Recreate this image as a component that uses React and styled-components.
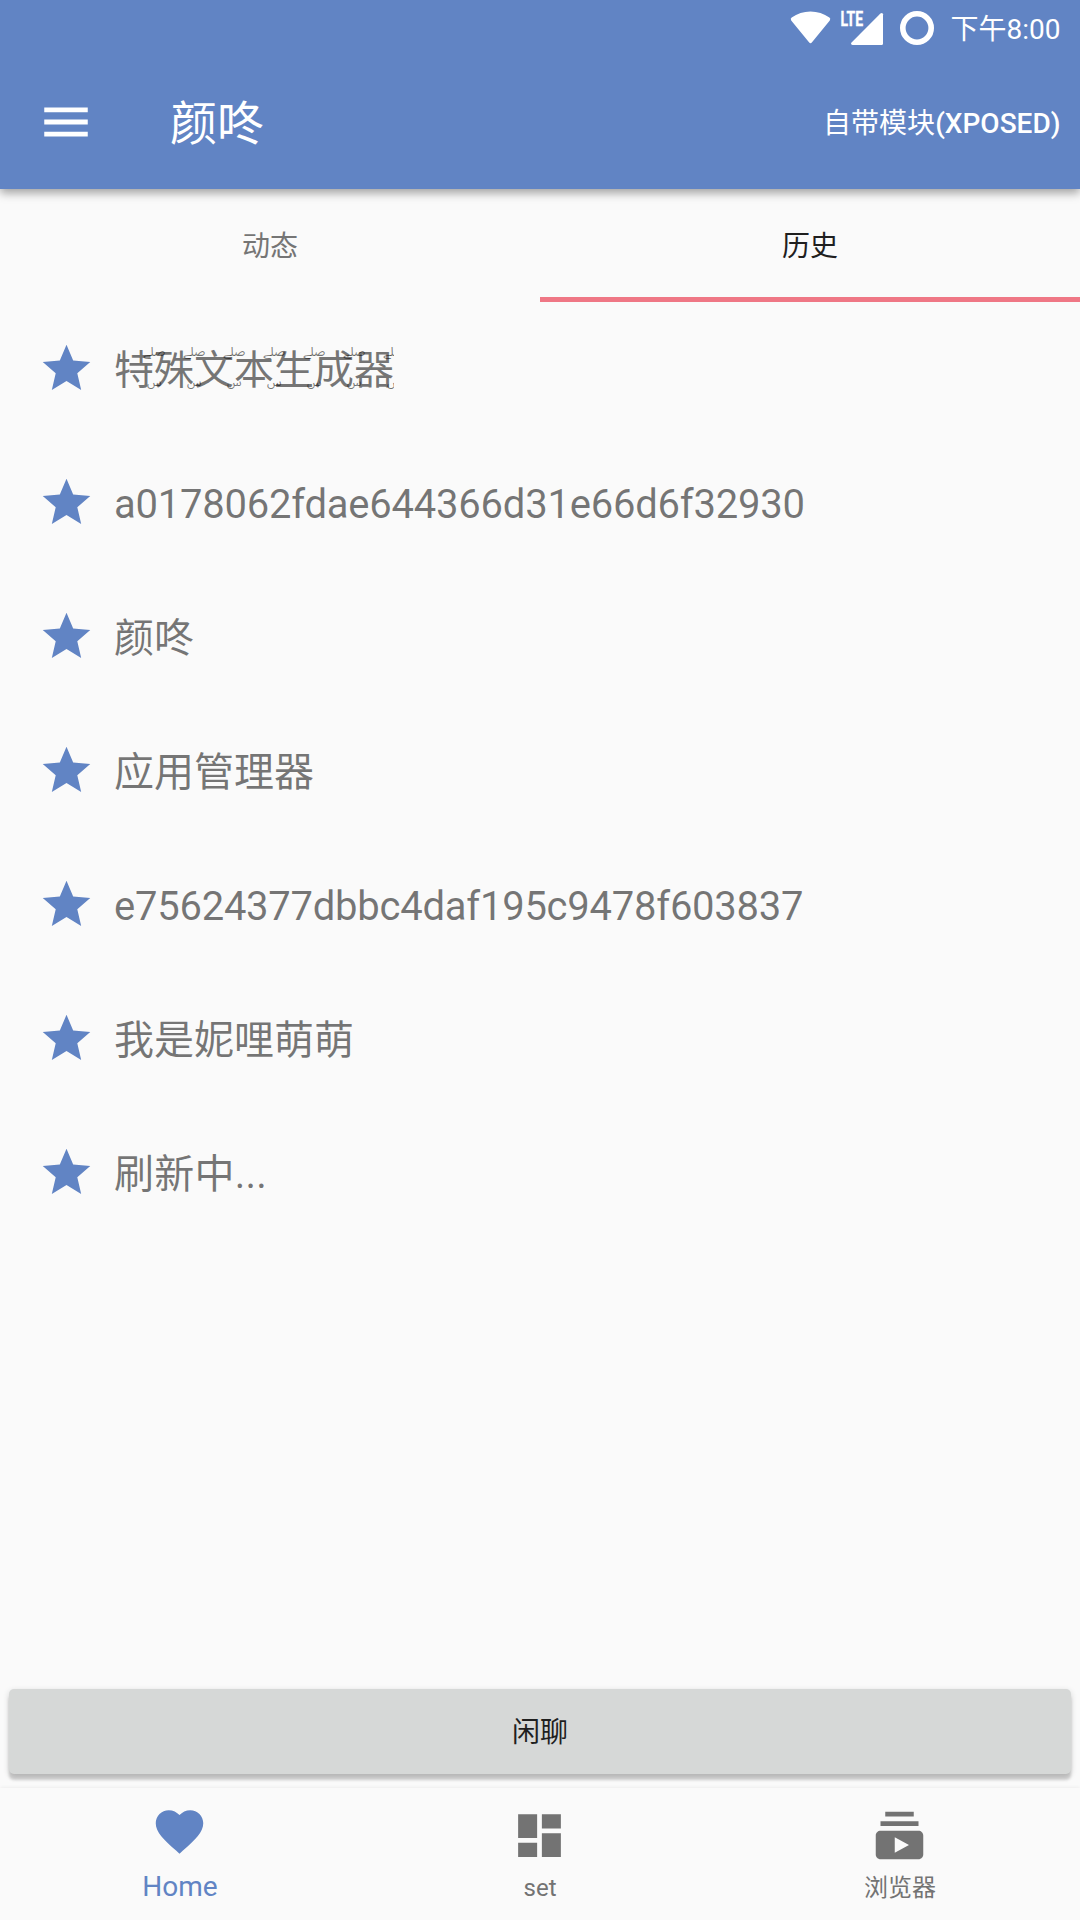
import React, { useState } from 'react';
import styled, { createGlobalStyle } from 'styled-components';

const GlobalStyle = createGlobalStyle`
  * {
    box-sizing: border-box;
  }

  body {
    margin: 0;
    background: #fafafa;
    font-family: Roboto, 'Noto Sans CJK SC', sans-serif;
  }

  button {
    border: none;
    padding: 0;
    background: none;
    font-family: inherit;
  }
`;

const Screen = styled.div`
  width: 1080px;
  height: 1920px;
  display: flex;
  flex-direction: column;
  overflow: hidden;
  background: #fafafa;
`;

const Header = styled.header`
  flex: none;
  height: 189px;
  color: #ffffff;
  background: #6184c4;
  box-shadow: 0 4px 9px rgba(0, 0, 0, 0.36);
`;

const StatusBar = styled.div`
  height: 57px;
  padding: 0 19.5px 0 789px;
  display: flex;
  align-items: center;
`;

const StatusIcons = styled.svg`
  flex: none;
  width: 150px;
  height: 57px;
`;

const Clock = styled.span`
  margin-left: auto;
  padding-top: 2px;
  font-size: 28px;
  line-height: 57px;
  white-space: nowrap;
`;

const Toolbar = styled.div`
  height: 132px;
  padding: 0 19.5px 0 37px;
  display: flex;
  align-items: center;
`;

const MenuButton = styled.button`
  width: 58px;
  height: 60px;
  padding-bottom: 2px;
  color: inherit;
`;

const Title = styled.h1`
  margin: 0 auto 0 75px;
  padding-top: 2px;
  font-size: 47px;
  font-weight: 400;
  line-height: 60px;
`;

const ModuleButton = styled.button`
  padding-top: 2px;
  color: inherit;
  font-size: 28px;
  line-height: 40px;
`;

const Medium = styled.span`
  font-weight: 500;
`;

const Tabs = styled.div`
  flex: none;
  height: 113px;
  display: grid;
  grid-template-columns: 1fr 1fr;
`;

const Tab = styled.button`
  padding-top: 2px;
  border-bottom: 5px solid ${(props) => (props.$active ? '#ef7785' : 'transparent')};
  color: ${(props) => (props.$active ? '#1f1f1f' : '#757575')};
  font-size: 28px;
`;

const List = styled.ul`
  flex: 1;
  margin: 0;
  padding: 0;
  list-style: none;
`;

const Row = styled.li`
  height: 134px;
  padding: 0 0 2px 38px;
  display: flex;
  align-items: center;
`;

const RowText = styled.span`
  margin-left: 19px;
  padding-top: 5px;
  color: rgba(0, 0, 0, 0.54);
  font-size: 40px;
  line-height: 60px;
  letter-spacing: ${(props) => props.$spacing || 'normal'};
`;

const Marked = styled.span`
  display: inline-flex;
  height: 60px;
  overflow-x: clip;
  overflow-y: visible;
  vertical-align: top;
`;

const MarkedChar = styled.span`
  position: relative;
  width: 40px;
`;

// small quranic signs which hang over the end of each character
const Mark = styled.span`
  position: absolute;
  left: ${(props) => (props.$low ? '33px' : '29.5px')};
  top: ${(props) => (props.$low ? '34px' : '3px')};
  font-family: 'Noto Sans Arabic', 'Noto Naskh Arabic', serif;
  font-size: ${(props) => (props.$low ? '12px' : '12.5px')};
  line-height: 16px;
  white-space: nowrap;
`;

const ChatButton = styled.button`
  flex: none;
  height: 85px;
  margin: 0 9px 14px;
  padding-bottom: 3px;
  border-radius: 5px;
  background: #d6d8d7;
  box-shadow: 0 6px 3px rgba(0, 0, 0, 0.17), 0 2px 6px rgba(0, 0, 0, 0.16);
  color: #1f1f1f;
  font-size: 28px;
`;

const BottomNav = styled.nav`
  flex: none;
  position: relative;
  height: 132px;
  display: grid;
  grid-template-columns: repeat(3, 1fr);
  background: #fafafa;
  box-shadow: 0 0 4px rgba(0, 0, 0, 0.08);
`;

const NavItem = styled.button`
  display: flex;
  flex-direction: column;
  align-items: center;
  padding-top: ${(props) => (props.$active ? '15px' : '19px')};
  color: ${(props) => (props.$active ? '#6184c4' : '#737373')};

  svg {
    margin-right: 1px;
  }
`;

const NavLabel = styled.span`
  margin-top: ${(props) => (props.$active ? '7px' : '4px')};
  font-size: ${(props) => (props.$active ? '28px' : '24px')};
  line-height: 40px;
`;

const Svg = styled.svg`
  display: block;
  flex: none;
  width: ${(props) => props.$size || 57}px;
  height: ${(props) => props.$size || 57}px;
  fill: ${(props) => props.$color || 'currentColor'};
`;

const icons = {
  menu: 'M3 18h18v-2H3v2zm0-5h18v-2H3v2zm0-7v2h18V6H3z',
  star: 'M12 17.27L18.18 21l-1.64-7.03L22 9.24l-7.19-.61L12 2 9.19 8.63 2 9.24l5.46 4.73L5.82 21z',
  heart:
    'M12 21.35l-1.45-1.32C5.4 15.36 2 12.28 2 8.5 2 5.42 4.42 3 7.5 3c1.74 0 3.41.81 4.5 2.09C13.09 3.81 14.76 3 16.5 3 19.58 3 22 5.42 22 8.5c0 3.78-3.4 6.86-8.55 11.54L12 21.35z',
  dashboard: 'M3 13h8V3H3v10zm0 8h8v-6H3v6zm10 0h8V11h-8v10zm0-18v6h8V3h-8z',
  subscriptions:
    'M20 8H4V6h16v2zm-2-6H6v2h12V2zm4 10v8c0 1.1-.9 2-2 2H4c-1.1 0-2-.9-2-2v-8c0-1.1.9-2 2-2h16c1.1 0 2 .9 2 2zm-6 4l-6-3.27v6.53L16 16z',
};

const Icon = ({ name, size, color }) => (
  <Svg viewBox="0 0 24 24" $size={size} $color={color}>
    <path d={icons[name]} />
  </Svg>
);

const tabs = ['动态', '历史'];

const history = [
  { id: 1, name: '特殊文本生成器', marked: true },
  { id: 2, name: 'a0178062fdae644366d31e66d6f32930', spacing: '-0.23px' },
  { id: 3, name: '颜咚' },
  { id: 4, name: '应用管理器' },
  { id: 5, name: 'e75624377dbbc4daf195c9478f603837', spacing: '-0.25px' },
  { id: 6, name: '我是妮哩萌萌' },
  { id: 7, name: '刷新中...', spacing: '0.25px' },
];

const navItems = [
  { icon: 'heart', label: 'Home' },
  { icon: 'dashboard', label: 'set' },
  { icon: 'subscriptions', label: '浏览器' },
];

const MarkedText = ({ text }) => (
  <Marked>
    {[...text].map((char, index) => (
      <MarkedChar key={index}>
        {char}
        <Mark>صلے</Mark>
        <Mark $low>س</Mark>
      </MarkedChar>
    ))}
  </Marked>
);

const App = () => {
  const [tab, setTab] = useState(1);
  const [page, setPage] = useState(0);

  return (
    <>
      <GlobalStyle />
      <Screen>
        <Header>
          <StatusBar>
            <StatusIcons viewBox="789 0 150 57" fill="#ffffff">
              <path d="M791.2 20.4Q790 18.8 791.7 17.6Q800 11.5 810.5 11.5T829.4 17.6Q831 18.8 829.8 20.4L812 42.3Q810.5 44 809 42.3Z" />
              <text
                x="840.5"
                y="26"
                fontSize="19.6"
                fontWeight="700"
                stroke="#ffffff"
                strokeWidth="0.4"
                textLength="22.5"
                lengthAdjust="spacingAndGlyphs"
              >
                LTE
              </text>
              <path d="M883 14.2V43.5Q883 45 881.5 45H852.5Q850 44.6 851.6 42.6L880.4 13.6Q882.4 12.2 883 14.2Z" />
              <circle cx="917" cy="28" r="14.2" fill="none" stroke="#ffffff" strokeWidth="5.6" />
            </StatusIcons>
            <Clock>下午8:00</Clock>
          </StatusBar>
          <Toolbar>
            <MenuButton>
              <Icon name="menu" size={58} />
            </MenuButton>
            <Title>颜咚</Title>
            <ModuleButton>
              自带模块<Medium>(XPOSED)</Medium>
            </ModuleButton>
          </Toolbar>
        </Header>

        <Tabs>
          {tabs.map((name, index) => (
            <Tab key={name} $active={tab === index} onClick={() => setTab(index)}>
              {name}
            </Tab>
          ))}
        </Tabs>

        <List>
          {history.map(({ id, name, marked, spacing }) => (
            <Row key={id}>
              <Icon name="star" color="#6184c4" />
              <RowText $spacing={spacing}>{marked ? <MarkedText text={name} /> : name}</RowText>
            </Row>
          ))}
        </List>

        <ChatButton>闲聊</ChatButton>

        <BottomNav>
          {navItems.map(({ icon, label }, index) => (
            <NavItem key={icon} $active={page === index} onClick={() => setPage(index)}>
              <Icon name={icon} />
              <NavLabel $active={page === index}>{label}</NavLabel>
            </NavItem>
          ))}
        </BottomNav>
      </Screen>
    </>
  );
};

export default App;
